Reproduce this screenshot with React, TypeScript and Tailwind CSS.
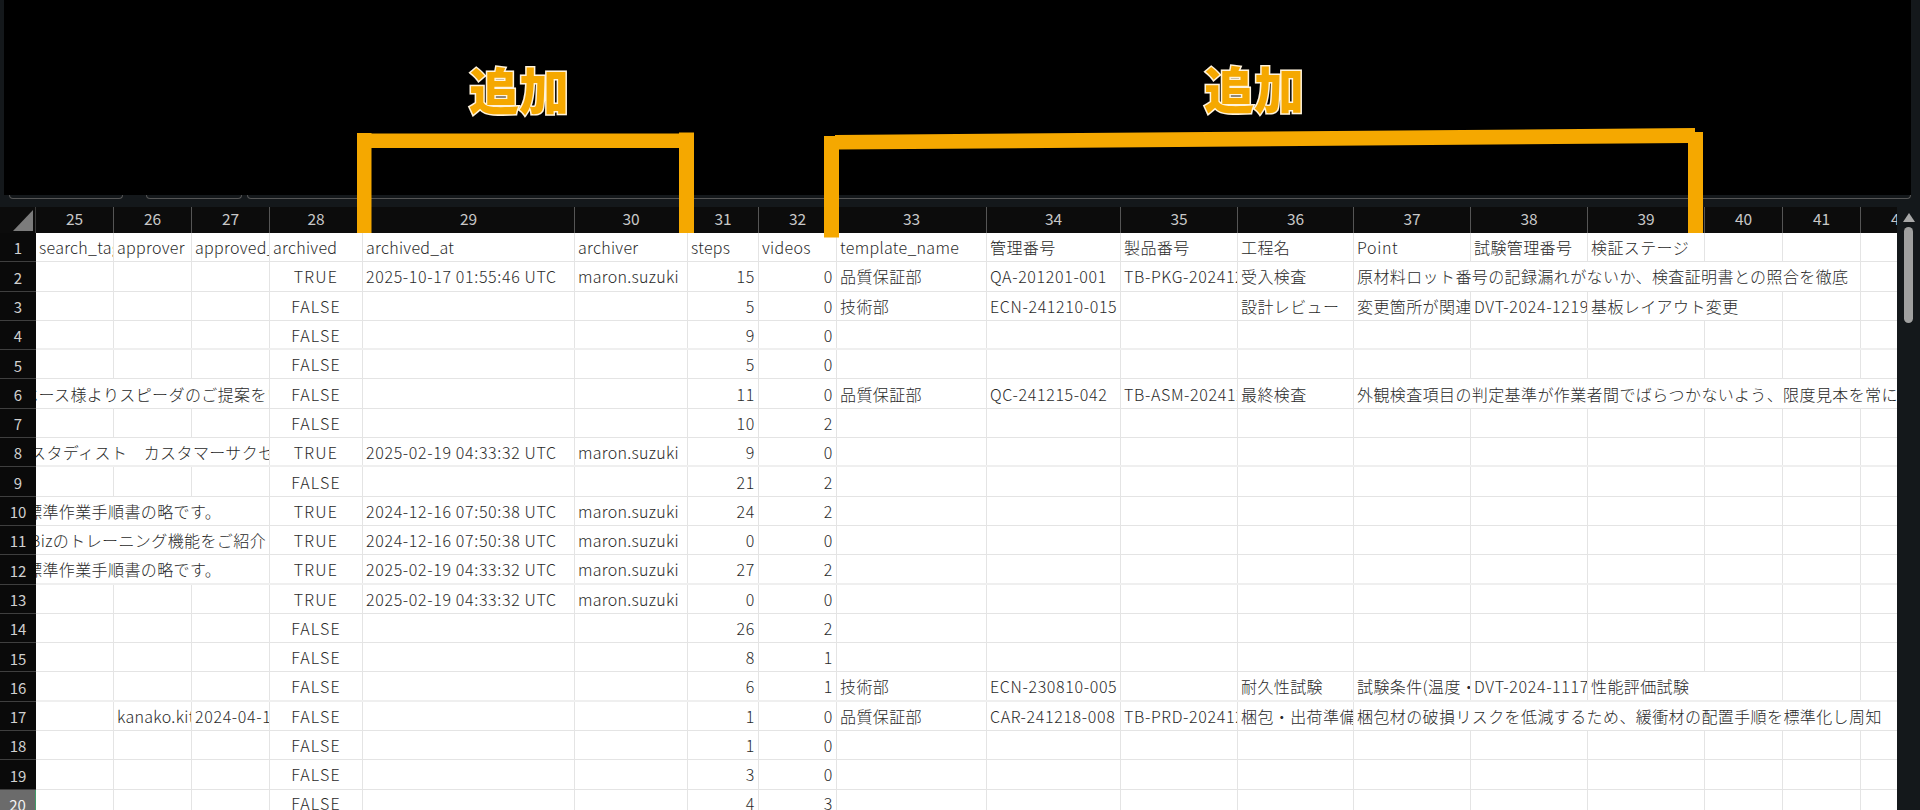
import React from "react";

type Cell = { t: string; span?: number; ml?: string };
type Row = Record<number, string | Cell>;

const COLS = [25, 26, 27, 28, 29, 30, 31, 32, 33, 34, 35, 36, 37, 38, 39, 40, 41, 42];
const GRID = "grid grid-cols-[78px_78px_78px_93px_212px_113px_71px_78px_150px_134px_117px_116px_117px_117px_117px_78px_78px_78px]";

const spanClass: Record<number, string> = {
  1: "col-span-1",
  2: "col-span-2",
  3: "col-span-3",
  4: "col-span-4",
  5: "col-span-5",
  6: "col-span-6",
};

const S1 = "2025-10-17 01:55:46 UTC";
const S2 = "2025-02-19 04:33:32 UTC";
const S3 = "2024-12-16 07:50:38 UTC";
const M = "maron.suzuki";
const SOP = "標準作業手順書の略です。";

const rows: Row[] = [
  { 25: "search_tag", 26: "approver", 27: "approved_at", 28: "archived", 29: "archived_at", 30: "archiver", 31: "steps", 32: "videos", 33: "template_name", 34: "管理番号", 35: "製品番号", 36: "工程名", 37: "Point", 38: "試験管理番号", 39: "検証ステージ" },
  { 28: "TRUE", 29: S1, 30: M, 31: "15", 32: "0", 33: "品質保証部", 34: "QA-201201-001", 35: "TB-PKG-20241201", 36: "受入検査", 37: { t: "原材料ロット番号の記録漏れがないか、検査証明書との照合を徹底", span: 5 } },
  { 28: "FALSE", 31: "5", 32: "0", 33: "技術部", 34: "ECN-241210-015", 36: "設計レビュー", 37: "変更箇所が関連する", 38: "DVT-2024-1219", 39: { t: "基板レイアウト変更", span: 2 } },
  { 28: "FALSE", 31: "9", 32: "0" },
  { 28: "FALSE", 31: "5", 32: "0" },
  { 25: { t: "ベース様よりスピーダのご提案をいただきました", span: 3, ml: "-ml-[17px]" }, 28: "FALSE", 31: "11", 32: "0", 33: "品質保証部", 34: "QC-241215-042", 35: "TB-ASM-20241215", 36: "最終検査", 37: { t: "外観検査項目の判定基準が作業者間でばらつかないよう、限度見本を常に確認する", span: 6 } },
  { 28: "FALSE", 31: "10", 32: "2" },
  { 25: { t: "スタディスト　カスタマーサクセスチーム", span: 3, ml: "-ml-[9px]" }, 28: "TRUE", 29: S2, 30: M, 31: "9", 32: "0" },
  { 28: "FALSE", 31: "21", 32: "2" },
  { 25: { t: SOP, span: 3, ml: "-ml-[13px]" }, 28: "TRUE", 29: S3, 30: M, 31: "24", 32: "2" },
  { 25: { t: "Bizのトレーニング機能をご紹介します", span: 3, ml: "-ml-[9px]" }, 28: "TRUE", 29: S3, 30: M, 31: "0", 32: "0" },
  { 25: { t: SOP, span: 3, ml: "-ml-[13px]" }, 28: "TRUE", 29: S2, 30: M, 31: "27", 32: "2" },
  { 28: "TRUE", 29: S2, 30: M, 31: "0", 32: "0" },
  { 28: "FALSE", 31: "26", 32: "2" },
  { 28: "FALSE", 31: "8", 32: "1" },
  { 28: "FALSE", 31: "6", 32: "1", 33: "技術部", 34: "ECN-230810-005", 36: "耐久性試験", 37: "試験条件(温度・湿度)", 38: "DVT-2024-1117", 39: { t: "性能評価試験", span: 2 } },
  { 26: "kanako.kitamura", 27: "2024-04-12", 28: "FALSE", 31: "1", 32: "0", 33: "品質保証部", 34: "CAR-241218-008", 35: "TB-PRD-20241218", 36: "梱包・出荷準備", 37: { t: "梱包材の破損リスクを低減するため、緩衝材の配置手順を標準化し周知", span: 6 } },
  { 28: "FALSE", 31: "1", 32: "0" },
  { 28: "FALSE", 31: "3", 32: "0" },
  { 28: "FALSE", 31: "4", 32: "3" },
];

function tracking(t: string) {
  if (/^[a-z_.]+$/.test(t)) return "tracking-[0.3px]";
  if (t === "TRUE" || t === "FALSE") return "tracking-[1.2px]";
  if (/^[A-Za-z0-9 :.-]+$/.test(t)) return "tracking-[0.65px]";
  return "tracking-[0.4px]";
}

function Cells({ row, isHeader }: { row: Row; isHeader: boolean }) {
  const out: React.ReactNode[] = [];
  let skip = 0;
  for (const c of COLS) {
    if (skip > 0) {
      skip--;
      continue;
    }
    const raw = row[c];
    const cell: Cell = typeof raw === "string" ? { t: raw } : raw ?? { t: "" };
    const span = cell.span ?? 1;
    skip = span - 1;
    let align = "justify-start pl-[3px]";
    if (!isHeader && c === 28) align = "justify-center";
    if (!isHeader && (c === 31 || c === 32)) align = "justify-end pr-[3px]";
    out.push(
      <div
        key={c}
        className={`flex items-center overflow-hidden whitespace-nowrap border-r border-[#e4e4e4] ${align} ${spanClass[span]}`}
      >
        <span className={`shrink-0 ${tracking(cell.t)} ${cell.ml ?? ""}`}>{cell.t}</span>
      </div>
    );
  }
  return <>{out}</>;
}

function Bracket() {
  return (
    <svg className="absolute left-0 top-0 pointer-events-none" width="1920" height="810" viewBox="0 0 1920 810">
      <path
        fill="#f5a800"
        d="M357 133H371.5V133.5H679V132.5H694V233H679V148H371.5V233H357Z"
      />
      <path
        fill="#f5a800"
        d="M824 136H835V135L1695 128V132H1703V233H1688V143L839 149.5V237.5H824Z"
      />
    </svg>
  );
}

function Label({ className }: { className: string }) {
  return (
    <div
      className={`absolute text-[50px] leading-none font-black text-[#f5a800] [-webkit-text-stroke:3px_#fff3dc] [paint-order:stroke_fill] ${className}`}
    >
      追加
    </div>
  );
}

export default function App() {
  return (
    <div className="relative h-[810px] w-[1920px] overflow-hidden bg-[#14181b] font-['Noto_Sans_CJK_JP',sans-serif]">
      {/* Ribbon */}
      <div className="h-[207px]">
        <div className="ml-[4px] mr-[9px] h-[195px] bg-black" />
        <div className="flex h-[4px] gap-[5px] pl-[9px] pr-[9px]">
          <div className="w-[114px] rounded-b-[5px] border-x border-b border-[#555]" />
          <div className="ml-[18px] w-[96px] rounded-b-[5px] border-x border-b border-[#555]" />
          <div className="flex-1 rounded-b-[5px] border-x border-b border-[#555]" />
        </div>
      </div>

      {/* Sheet */}
      <div className="flex h-[603px]">
        <div className="w-[1897px] overflow-hidden">
          {/* Column header */}
          <div className="flex h-[26px] bg-[#0c0c0c] text-[15.5px] text-[#c8c8c8]">
            <div className="relative w-[36px] shrink-0 border-r border-[#3a3a3a]">
              <svg className="absolute left-0 top-0" width="36" height="26" viewBox="0 0 36 26">
                <path d="M13 24L33 3V24Z" fill="#7c7c7c" />
              </svg>
            </div>
            <div className={`${GRID} shrink-0`}>
              {COLS.map((c) => (
                <div key={c} className="flex items-center justify-center border-r border-[#555] pb-[3px]">
                  {c}
                </div>
              ))}
            </div>
          </div>
          {/* Rows */}
          {rows.map((row, i) => {
            const n = i + 1;
            const thick = n % 4 === 0;
            const selected = n === 20;
            return (
              <div key={n} className="flex h-[29.3px]">
                <div
                  className={`flex w-[36px] shrink-0 items-center justify-center border-b pt-[3px] text-[15px] ${
                    selected
                      ? "border-[#6b6b6b] border-r border-r-[#3f9a68] bg-[#6b6b6b] text-[#f2f2f2]"
                      : "border-[#3f3f3f] bg-[#0a0a0a] text-[#d0d0d0]"
                  }`}
                >
                  {n}
                </div>
                <div
                  className={`${GRID} shrink-0 bg-white text-[16px] font-light text-[#2a2a2a] ${
                    thick ? "border-b-2 border-[#efefef]" : "border-b border-[#e4e4e4]"
                  }`}
                >
                  <Cells row={row} isHeader={n === 1} />
                </div>
              </div>
            );
          })}
        </div>
        {/* Scrollbar */}
        <div className="flex w-[23px] flex-col items-center">
          <svg className="mt-[6px]" width="12" height="9" viewBox="0 0 12 9">
            <path d="M6 0L12 9H0Z" fill="#a8a8a8" />
          </svg>
          <div className="mt-[5px] h-[96px] w-[9px] rounded-full bg-[#a0a0a0]" />
        </div>
      </div>

      {/* Annotation overlay */}
      <Bracket />
      <Label className="left-[469px] top-[63px]" />
      <Label className="left-[1204px] top-[62px]" />
    </div>
  );
}
